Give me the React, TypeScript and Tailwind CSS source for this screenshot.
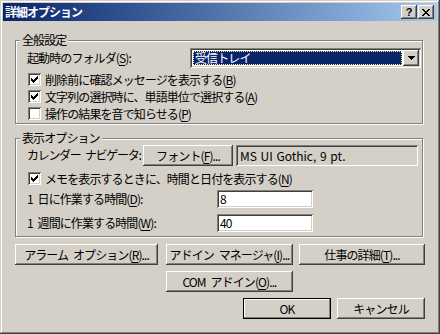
import type { ReactNode } from "react";

const raised =
  "shadow-[inset_-1px_-1px_0_#404040,inset_1px_1px_0_#ffffff,inset_-2px_-2px_0_#808080,inset_2px_2px_0_#d4d0c8]";
const sunken =
  "shadow-[inset_1px_1px_0_#808080,inset_-1px_-1px_0_#ffffff,inset_2px_2px_0_#404040,inset_-2px_-2px_0_#d4d0c8]";

function U({ children }: { children: ReactNode }) {
  return <span className="underline underline-offset-2">{children}</span>;
}

function Check({ checked }: { checked?: boolean }) {
  return (
    <span className={`w-[13px] h-[13px] bg-white shrink-0 flex items-center justify-center ${sunken}`}>
      {checked && (
        <svg width="7" height="7" viewBox="0 0 7 7" shapeRendering="crispEdges">
          <path
            d="M0 2h1v3H0z M1 3h1v3H1z M2 4h1v3H2z M3 3h1v3H3z M4 2h1v3H4z M5 1h1v3H5z M6 0h1v3H6z"
            fill="#000"
          />
        </svg>
      )}
    </span>
  );
}

function CheckRow({ checked, children }: { checked?: boolean; children: ReactNode }) {
  return (
    <div className="h-[17px] pl-[12px] flex items-center gap-[4px]">
      <Check checked={checked} />
      <span className="whitespace-nowrap">{children}</span>
    </div>
  );
}

function Btn({ className, children }: { className: string; children: ReactNode }) {
  return (
    <div className={`h-[21px] flex items-center justify-center whitespace-nowrap bg-[#d4d0c8] ${raised} ${className}`}>
      {children}
    </div>
  );
}

function Group({ title, className, children }: { title: string; className: string; children: ReactNode }) {
  return (
    <div
      className={`relative ml-[12px] w-[408px] border border-[#808080] shadow-[inset_1px_1px_0_#ffffff,1px_1px_0_#ffffff] ${className}`}
    >
      <span className="absolute left-[4px] top-[-8px] px-[2px] bg-[#d4d0c8] leading-[14px]">{title}</span>
      {children}
    </div>
  );
}

export default function App() {
  return (
    <div
      className="w-[440px] h-[334px] bg-[#d4d0c8] p-[3px] flex flex-col text-[12px] leading-[14px] text-black tracking-[-0.9px] [word-spacing:3px] font-['Noto_Sans_CJK_JP',sans-serif] shadow-[inset_-1px_-1px_0_#404040,inset_1px_1px_0_#d4d0c8,inset_-2px_-2px_0_#808080,inset_2px_2px_0_#ffffff]"
    >
      {/* Title bar */}
      <div className="h-[18px] flex items-center pl-[2px] pr-[3px] bg-gradient-to-r from-[#0a246a] to-[#a6caf0]">
        <span className="flex-1 text-white font-bold tracking-[-1px]">詳細オプション</span>
        <div className="flex gap-[1px]">
          <div className={`w-[16px] h-[14px] flex items-center justify-center bg-[#d4d0c8] ${raised}`}>
            <span className="font-bold text-[11px] leading-none font-['Liberation_Sans',sans-serif] tracking-normal">?</span>
          </div>
          <div className={`w-[16px] h-[14px] flex items-center justify-center bg-[#d4d0c8] ${raised}`}>
            <svg width="8" height="7" viewBox="0 0 8 7" shapeRendering="crispEdges">
              <path
                d="M0 0h2v1H0z M6 0h2v1H6z M1 1h2v1H1z M5 1h2v1H5z M2 2h4v1H2z M3 3h2v1H3z M2 4h4v1H2z M1 5h2v1H1z M5 5h2v1H5z M0 6h2v1H0z M6 6h2v1H6z"
                fill="#000"
              />
            </svg>
          </div>
        </div>
      </div>

      {/* 全般設定 */}
      <Group title="全般設定" className="mt-[19px] h-[84px]">
        <div className="pt-[7px] pl-[11px] pr-[1px] flex items-center justify-between">
          <span className="whitespace-nowrap">
            起動時のフォルダ(<U>S</U>):
          </span>
          <div className={`w-[231px] h-[20px] bg-white flex items-center p-[2px] ${sunken}`}>
            <div className="flex-1 h-[14px] ml-[1px] bg-[#0a246a] border border-dotted border-[#ffff80] text-white flex items-center pl-[1px]">
              受信トレイ
            </div>
            <div className={`w-[16px] h-[16px] ml-[1px] flex items-center justify-center bg-[#d4d0c8] ${raised}`}>
              <svg width="7" height="4" viewBox="0 0 7 4" shapeRendering="crispEdges">
                <path d="M0 0h7v1H0z M1 1h5v1H1z M2 2h3v1H2z M3 3h1v1H3z" fill="#000" />
              </svg>
            </div>
          </div>
        </div>
        <div className="mt-[3px]">
          <CheckRow checked>
            削除前に確認メッセージを表示する(<U>B</U>)
          </CheckRow>
          <CheckRow checked>
            文字列の選択時に、単語単位で選択する(<U>A</U>)
          </CheckRow>
          <CheckRow>
            操作の結果を音で知らせる(<U>P</U>)
          </CheckRow>
        </div>
      </Group>

      {/* 表示オプション */}
      <Group title="表示オプション" className="mt-[14px] h-[99px]">
        <div className="pt-[6px] pl-[11px] flex items-start">
          <span className="w-[116px] h-[20px] flex items-center whitespace-nowrap tracking-[-1.3px]">
            カレンダー ナビゲータ:
          </span>
          <Btn className="w-[90px] h-[20px]">
            フォント(<U>F</U>)...
          </Btn>
          <div
            className={`ml-[3px] w-[182px] h-[21px] flex items-center pl-[4px] whitespace-nowrap tracking-normal [word-spacing:1px] ${sunken}`}
          >
            MS UI Gothic, 9 pt.
          </div>
        </div>
        <div className="mt-[4px]">
          <CheckRow checked>
            メモを表示するときに、時間と日付を表示する(<U>N</U>)
          </CheckRow>
        </div>
        <div className="mt-[3px] pl-[11px] flex items-center">
          <span className="w-[190px] whitespace-nowrap">
            1 日に作業する時間(<U>D</U>):
          </span>
          <div className={`w-[96px] h-[18px] bg-white flex items-center pl-[3px] ${sunken}`}>8</div>
        </div>
        <div className="mt-[6px] pl-[11px] flex items-center">
          <span className="w-[190px] whitespace-nowrap">
            1 週間に作業する時間(<U>W</U>):
          </span>
          <div className={`w-[96px] h-[18px] bg-white flex items-center pl-[3px] ${sunken}`}>40</div>
        </div>
      </Group>

      {/* Buttons */}
      <div className="mt-[7px] ml-[12px] flex">
        <Btn className="w-[143px]">
          アラーム オプション(<U>R</U>)...
        </Btn>
        <Btn className="ml-[8px] w-[127px]">
          アドイン マネージャ(<U>I</U>)...
        </Btn>
        <Btn className="ml-[6px] w-[126px]">
          仕事の詳細(<U>T</U>)...
        </Btn>
      </div>
      <div className="mt-[6px] ml-[163px] flex">
        <Btn className="w-[127px]">
          COM アドイン(<U>O</U>)...
        </Btn>
      </div>
      <div className="mt-[6px] ml-[240px] flex">
        <div className="w-[88px] h-[21px] flex items-center justify-center border border-black shadow-[inset_-1px_-1px_0_#808080,inset_1px_1px_0_#ffffff]">
          OK
        </div>
        <Btn className="ml-[6px] w-[88px]">キャンセル</Btn>
      </div>
    </div>
  );
}
